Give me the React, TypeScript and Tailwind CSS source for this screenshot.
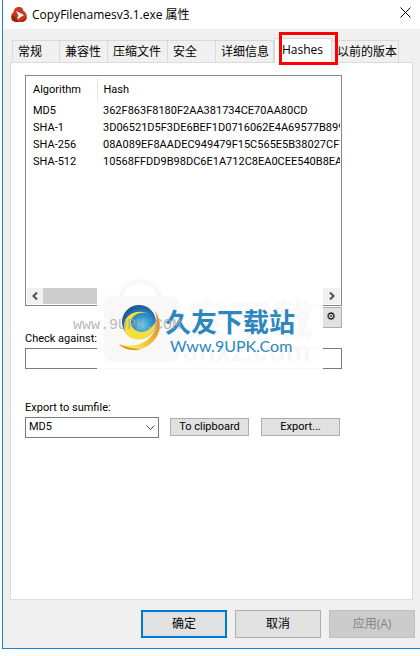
import { useState } from "react";

const hashes = [
  { algorithm: "MD5", hash: "362F863F8180F2AA381734CE70AA80CD" },
  { algorithm: "SHA-1", hash: "3D06521D5F3DE6BEF1D0716062E4A69577B899" },
  { algorithm: "SHA-256", hash: "08A089EF8AADEC949479F15C565E5B38027CF7" },
  { algorithm: "SHA-512", hash: "10568FFDD9B98DC6E1A712C8EA0CEE540B8EA" },
];

const tabs = [
  { label: "常规", width: "w-12", align: "pl-[5px]" },
  { label: "兼容性", width: "w-12", align: "pl-[5px]" },
  { label: "压缩文件", width: "w-[60px]", align: "pl-[5px]" },
  { label: "安全", width: "w-12", align: "pl-[5px]" },
  { label: "详细信息", width: "w-[58px]", align: "pl-[5px]" },
  { label: "Hashes", width: "w-[58px]", align: "pl-[7px]" },
  { label: "以前的版本", width: "w-[67px]", align: "pl-[5px]" },
];

function AppIcon() {
  return (
    <svg className="h-4 w-4" viewBox="0 0 16 16" aria-hidden="true">
      <path d="M7 0c3-.500 5 1 5.500 4 2.500 1.500 4 4 3 7.500-1 3-4 3.500-7.500 3.500s-6.500 0-7.500-3C-.500 9 .500 6.500 2.500 5 3 2 4.500.400 7 0z" fill="#c93a20" />
      <path d="M1 9c2-1.500 4 1.500 7 6-4 0-6.500-.500-7.500-3z" fill="#962412" />
      <path d="M9 13c2 .500 5-1 6.500-3.500.500 4-2 5.500-6 5.500z" fill="#a92b16" />
      <path d="M5 4L13 8L6 12.500L7.500 8.500z" fill="#fff" />
    </svg>
  );
}

function Swirl() {
  return (
    <svg className="absolute left-[22px] top-[25px] h-[50px] w-[46px]" viewBox="0 0 46 50" aria-hidden="true">
      <defs>
        <radialGradient id="globe" cx="0.600" cy="0.600" r="0.600">
          <stop offset="0" stopColor="#62cbea" />
          <stop offset="0.500" stopColor="#2d8fc6" />
          <stop offset="1" stopColor="#1d5796" />
        </radialGradient>
        <linearGradient id="ring" x1="0.300" x2="1" y1="0.700" y2="0.300">
          <stop offset="0" stopColor="#f6e24a" />
          <stop offset="1" stopColor="#e8891c" />
        </linearGradient>
      </defs>
      <circle cx="20" cy="19" r="17" fill="url(#globe)" />
      <path d="M36 8C46 22 40 40 22 46C14 48 5 47 0 41C12 45 26 42 33 32C38 25 39 17 36 8z" fill="url(#ring)" />
      <path d="M0 41C6 47 14 48 22 46C15 46 7 45 0 41z" fill="#dd8420" />
      <path d="M30 11C18 5 5 12 5 23C5 35 18 40 28 34C33 31 37 25 37 18C32 27 25 31 18 28C11 25 10 17 15 13C20 9 25 9 30 11z" fill="#f5df3a" />
    </svg>
  );
}

function Watermark() {
  return (
    <div className="pointer-events-none absolute left-[62px] top-[215px] h-[94px] w-[250px]">
      <div className="absolute left-6 top-0 h-full w-[226px] overflow-hidden bg-white/95">
        <svg className="absolute inset-0 h-full w-full" viewBox="0 0 226 94" aria-hidden="true">
          <path d="M24 20c0-22 38-22 38 0" fill="none" stroke="#f8f8f8" strokeWidth="5" />
          <rect x="7" y="18" width="76" height="66" rx="9" fill="#f8f8f8" />
        </svg>
        <p className="absolute left-[90px] top-[14px] whitespace-nowrap font-['Noto_Sans_CJK_SC',sans-serif] text-[42px] font-bold leading-[50px] text-[#f9f9f9]">安下载</p>
        <p className="absolute left-[86px] top-[58px] whitespace-nowrap font-['Liberation_Sans',sans-serif] text-[28px] font-bold leading-8 text-[#f7f7f7]">anxz.com</p>
        <Swirl />
        <p className="absolute left-[68px] top-[25px] whitespace-nowrap font-['Noto_Sans_CJK_SC',sans-serif] text-[26px] font-bold leading-9 text-[#2c87bd]">久友下载站</p>
        <p className="absolute left-[73px] top-14 whitespace-nowrap font-['Lato',sans-serif] text-base leading-6 text-[#2c87bd]">Www.9UPK.Com</p>
      </div>
      <p className="absolute left-0 top-[38px] whitespace-nowrap font-['Liberation_Mono',monospace] text-[15px] leading-5 text-[#a8a8a8]/80">www.9UPK.COM</p>
    </div>
  );
}

function ScrollArrow({ flip = false }: { flip?: boolean }) {
  return (
    <button type="button" aria-label={flip ? "Scroll right" : "Scroll left"} className="flex h-4 w-4 items-center justify-center">
      <svg className="h-2 w-2" viewBox="0 0 8 8" fill="none" stroke="#505050" strokeWidth="2">
        <path d={flip ? "M2 0.500L5.500 4L2 7.500" : "M6 0.500L2.500 4L6 7.500"} />
      </svg>
    </button>
  );
}

export default function App() {
  const [selected, setSelected] = useState("Hashes");
  const [check, setCheck] = useState("");

  return (
    <div className="bg-white pb-[7px] pl-[2px] font-['Open_Sans','Noto_Sans_CJK_SC',sans-serif] text-xs text-black">
      <main className="border-b border-l border-[#1883d7] bg-[#f0f0f0]">
        <header className="flex h-[29px] items-center bg-white pl-2 pr-[7px]">
          <AppIcon />
          <h1 className="ml-[5px] flex-1 whitespace-nowrap text-xs font-normal">CopyFilenamesv3.1.exe 属性</h1>
          <button type="button" aria-label="Close" className="-mt-1 flex h-4 w-4 items-center justify-center">
            <svg className="h-[11px] w-[11px]" viewBox="0 0 11 11" stroke="#000">
              <path d="M0.500 0.500l10 10M10.500 0.500l-10 10" />
            </svg>
          </button>
        </header>

        <div className="px-[7px] pt-[9px]">
          <div role="tablist" className="flex h-6 items-end pl-[2px]">
            {tabs.map((tab) => {
              const active = tab.label === "Hashes";
              return (
                <button
                  key={tab.label}
                  type="button"
                  role="tab"
                  aria-selected={selected === tab.label}
                  onClick={() => setSelected(tab.label)}
                  className={`${tab.width} ${tab.align} relative shrink-0 whitespace-nowrap border-t border-[#d9d9d9] text-left ${
                    active ? "z-10 -mb-px h-[25px] border-x bg-white pb-[2px]" : "h-[22px] border-r"
                  } ${tab.label === "常规" ? "border-l" : ""}`}
                >
                  {tab.label}
                  {active && <span className="absolute -top-[7px] left-1 h-[33px] w-[59px] border-3 border-[#ff0000]" />}
                </button>
              );
            })}
          </div>

          <section className="relative h-[538px] border border-[#dcdcdc] bg-white pl-[14px] pr-[70px] pt-3 font-['Roboto',sans-serif] text-[11px]">
            <div className="flex h-[231px] flex-col justify-between border border-[#828790] p-px">
              <div className="overflow-hidden">
                <table className="w-full table-fixed text-left leading-[17px]">
                  <thead>
                    <tr>
                      <th className="h-[25px] w-[70px] border-r border-[#e5e5e5] pl-[6px] font-normal">Algorithm</th>
                      <th className="pl-[6px] font-normal">Hash</th>
                    </tr>
                  </thead>
                  <tbody>
                    {hashes.map((row) => (
                      <tr key={row.algorithm}>
                        <td className="pl-[6px]">{row.algorithm}</td>
                        <td className="overflow-hidden whitespace-nowrap pl-[6px]">{row.hash}</td>
                      </tr>
                    ))}
                  </tbody>
                </table>
              </div>
              <div className="flex h-4 items-center bg-[#f0f0f0]">
                <ScrollArrow />
                <div className="h-4 w-[75px] bg-[#cdcdcd]" />
                <div className="flex-1" />
                <ScrollArrow flip />
              </div>
            </div>
            <div className="mt-px flex h-[21px] items-stretch justify-end gap-[10px]">
              <p className="whitespace-nowrap leading-5">Done. (1/0)</p>
              <button type="button" aria-label="Settings" className="flex w-[22px] items-center justify-center border border-[#adadad] bg-[#e1e1e1] font-['DejaVu_Sans',sans-serif] text-[11px]">⚙</button>
            </div>
            <label htmlFor="check" className="block h-5 leading-[21px]">Check against:</label>
            <input id="check" value={check} onChange={(e) => setCheck(e.target.value)} className="block h-[21px] w-full border border-[#7a7a7a] px-1" />

            <label htmlFor="sumfile" className="mt-[29px] block h-[19px] leading-5">Export to sumfile:</label>
            <div className="flex items-start">
              <div className="relative mr-[11px] w-[134px]">
                <select id="sumfile" className="block h-[21px] w-full appearance-none border border-[#7a7a7a] bg-white pl-[3px]">
                  {hashes.map((row) => (
                    <option key={row.algorithm}>{row.algorithm}</option>
                  ))}
                </select>
                <svg className="pointer-events-none absolute right-1 top-2 h-[6px] w-[9px]" viewBox="0 0 9 6" fill="none" stroke="#505050">
                  <path d="M0.500 0.500l4 4 4-4" />
                </svg>
              </div>
              <button type="button" className="mr-3 mt-px h-[18px] w-[79px] border border-[#adadad] bg-[#e1e1e1]">To clipboard</button>
              <button type="button" className="mt-px h-[18px] w-[79px] border border-[#adadad] bg-[#e1e1e1]">Export...</button>
            </div>

            <Watermark />
          </section>

          <footer className="-mr-[2px] flex h-12 items-start justify-end gap-2 pt-[10px]">
            <button type="button" className="h-7 w-[86px] border-2 border-[#0078d7] bg-[#e1e1e1]">确定</button>
            <button type="button" className="h-7 w-[86px] border border-[#adadad] bg-[#e1e1e1]">取消</button>
            <button type="button" disabled className="h-7 w-[86px] border border-[#bfbfbf] bg-[#cccccc] text-[#838383]">应用(A)</button>
          </footer>
        </div>
      </main>
    </div>
  );
}
